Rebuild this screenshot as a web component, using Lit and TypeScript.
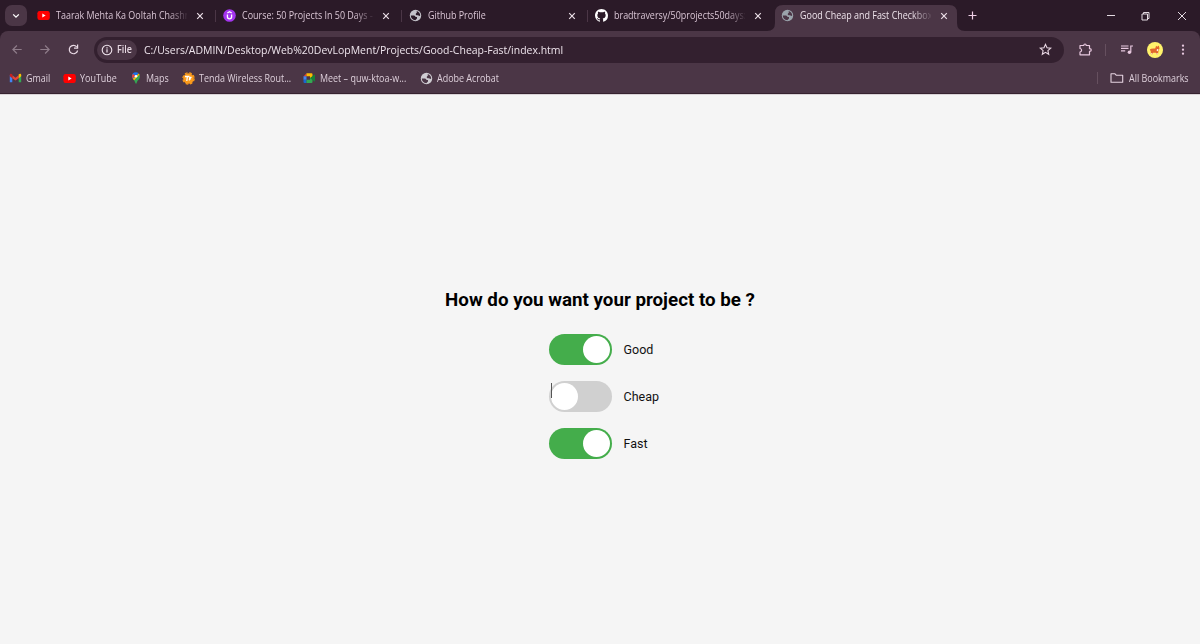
import { LitElement, html, css, nothing } from "lit";
import { customElement, property } from "lit/decorators.js";

const youtube = html`<svg width="13" height="13" viewBox="0 0 13 13"><rect x=".4" y="2" width="12.4" height="9" rx="2.2" fill="#f00"/><path d="M5.3 4.6v3.8l3.3-1.9z" fill="#fff"/></svg>`;
const udemy = html`<svg width="13" height="13" viewBox="0 0 13 13"><circle cx="6.5" cy="6.5" r="6.3" fill="#a435f0"/><path d="M4.4 5.6v2.2a2.1 2.1 0 0 0 4.2 0V5.6M4.3 4l2.2-1.3L8.7 4" fill="none" stroke="#fff" stroke-width="1.3"/></svg>`;
const globe = (bg: string, hole: string) => html`<svg width="13" height="13" viewBox="-.5 -.5 13 13"><circle cx="6" cy="6" r="5.700" fill=${bg}/><path fill=${hole} d="M1.300 6H4.400Q6 6.100 6 7.400H7.500V9.100L5.800 10.700Q1.600 10.300 1.300 6zM7.200 1.500Q10.600 2.600 10.700 6Q9.700 6.900 8.700 5.700H7Q5.700 5 6.400 4L7.300 3.200z"/></svg>`;
const github = html`<svg width="13" height="13" viewBox="0 0 16 16"><path fill="#fff" d="M8 0C3.580 0 0 3.580 0 8c0 3.540 2.290 6.530 5.470 7.590.4.070.550-.170.550-.380 0-.190-.010-.820-.010-1.490-2.010.370-2.530-.490-2.690-.940-.090-.230-.480-.940-.820-1.130-.280-.150-.680-.520-.010-.530.630-.010 1.080.580 1.230.820.720 1.210 1.870.870 2.330.660.070-.520.280-.870.510-1.070-1.780-.2-3.640-.890-3.640-3.950 0-.870.310-1.590.820-2.150-.080-.2-.360-1.020.080-2.120 0 0 .670-.210 2.200.820.640-.180 1.320-.270 2-.270s1.360.090 2 .270c1.530-1.040 2.200-.820 2.200-.820.440 1.100.160 1.920.080 2.120.510.560.820 1.270.820 2.150 0 3.070-1.870 3.750-3.650 3.950.290.250.540.730.540 1.480 0 1.070-.010 1.930-.010 2.200 0 .210.150.460.550.380A8.010 8.010 0 0 0 16 8c0-4.420-3.580-8-8-8z"/></svg>`;
const gmail = html`<svg width="13" height="12" viewBox="0 0 12 12"><path d="M.3 3v7.300h2.500V5z" fill="#4285f4"/><path d="M9.200 5v5.300h2.500V3z" fill="#34a853"/><path d="M2.800 3.300v2.900L6 8.600l3.200-2.400V3.300L6 5.700z" fill="#ea4335"/><path d="M.3 2.900c0-1.300 1.300-1.700 2.500-.7v4L.3 4.300z" fill="#c5221f"/><path d="M11.700 2.900c0-1.300-1.300-1.700-2.500-.7v4l2.500-1.900z" fill="#fbbc04"/></svg>`;
const maps = html`<svg width="12" height="12" viewBox="0 0 12 12"><path d="M6 .3a4 4 0 0 0-4 4c0 1.200.5 2 1.200 2.900L6 4.200l2.600-3A4 4 0 0 0 6 .3z" fill="#1a73e8"/><path d="M2.900 1.800A4 4 0 0 0 2.600 6.400l2.500-2.900z" fill="#ea4335"/><path d="M8.800 1.500 2.800 6.700 4.200 8.500 9.700 3z" fill="#fbbc04"/><path d="M9.500 2.400C10.600 4.900 9.500 6.700 8 8.300 7.100 9.300 6.900 10.800 6.200 11.700 5.500 12 5.300 9.800 4.100 8.400z" fill="#34a853"/><circle cx="6" cy="4.200" r="1.300" fill="#fff"/></svg>`;
const tenda = html`<svg width="13" height="13" viewBox="0 0 13 13"><circle cx="6.500" cy="6.500" r="5.300" fill="#fa9a1b"/><circle cx="6.500" cy="6.500" r="5.600" fill="none" stroke="#fa9a1b" stroke-width="1.300" stroke-dasharray="2.700 1.700"/><path d="M3 4.500h4.500M5.400 4.500 4.800 9M9.600 5.300H7.800L7.300 8.300M7.500 6.800h1.600" fill="none" stroke="#fff" stroke-width="1.300"/></svg>`;
const meet = html`<svg width="13" height="12" viewBox="0 0 13 12"><path d="M.5 4.500 3.500 1.200v3.300z" fill="#ea4335"/><path d="M3.500 1.200H8.500Q9.500 1.200 9.500 2.300V5L7 6.200V4.300H3.500z" fill="#fbbc04"/><path d="M.5 4.300h3v3.500h-3z" fill="#4285f4"/><path d="M.5 7.800h3v3.300h-2q-1 0-1-1z" fill="#1967d2"/><path d="M3.500 7.800H7V5.900l2.500.1V10.100q0 1-1 1h-5z" fill="#34a853"/><path d="M7 6.100 11.300 2.700q.7-.3.700.4v6q0 .7-.7.400z" fill="#188038"/></svg>`;
const cross = html`<svg width="8" height="8" viewBox="0 0 8 8"><path d="m1.200 1.200 5.600 5.600M6.800 1.200 1.200 6.800" stroke="currentColor" stroke-width="1.200"/></svg>`;

const tabs = [
  { icon: youtube, title: "Taarak Mehta Ka Ooltah Chashn" },
  { icon: udemy, title: "Course: 50 Projects In 50 Days -" },
  { icon: globe("#c4c2c9", "#2b1a28"), title: "Github Profile" },
  { icon: github, title: "bradtraversy/50projects50days:" },
  { icon: globe("#9aa3ab", "#4b3646"), title: "Good Cheap and Fast Checkbox" },
];
const bookmarks = [
  { icon: gmail, label: "Gmail", width: 54 },
  { icon: youtube, label: "YouTube", width: 66.500 },
  { icon: maps, label: "Maps", width: 52.500 },
  { icon: tenda, label: "Tenda Wireless Rout...", width: 120.500 },
  { icon: meet, label: "Meet – quw-ktoa-w...", width: 117.500 },
  { icon: globe("#cfccd2", "#4b3646"), label: "Adobe Acrobat", width: 100 },
];

@customElement("browser-chrome")
export class BrowserChrome extends LitElement {
  static styles = css`
    :host { display: block; height: 95px; box-sizing: border-box; background: #2b1a28; color: #e6d8e2; font: 10px/13px "Open Sans", "Noto Sans", sans-serif; }
    * { box-sizing: border-box; }
    svg { display: block; flex: none; }
    .narrow { display: inline-block; white-space: nowrap; transform: scaleX(.895); transform-origin: 0 50%; }
    .strip { display: flex; height: 31px; }
    .search { width: 22px; height: 21px; margin: 5px 3px 0 5px; border-radius: 7px; background: #4b3646; display: grid; place-items: center; }
    .tab { position: relative; width: 186px; height: 31px; display: flex; align-items: center; padding-left: 7px; color: #dac6d5; }
    .icon { width: 19px; display: flex; }
    .title { width: 131px; flex: none; white-space: nowrap; mask-image: linear-gradient(90deg, #000 112px, transparent 133px); }
    .close { width: 26px; display: grid; place-items: center; color: #ecdfe8; }
    .sep { width: 1px; height: 12px; background: #4b3646; margin-left: 2px; }
    .active { color: #eee3eb; }
    .active > .icon, .active > .title, .active > .close { position: relative; }
    .shape { position: absolute; left: -7px; top: 5px; }
    .plus { width: 36px; display: flex; align-items: center; padding-left: 8px; }
    .window { margin-left: auto; display: flex; align-items: center; }
    .toolbar { height: 32px; background: #4b3646; border-radius: 8px 8px 0 0; display: flex; align-items: center; padding: 5px 0 0 11px; }
    .nav { width: 28px; display: flex; }
    .url { width: 970px; height: 26px; margin-left: -1px; border-radius: 13px; background: #33202f; display: flex; align-items: center; padding: 0 12px 0 3px; }
    .file { width: 40px; height: 20px; flex: none; border-radius: 10px; background: #4b3646; display: flex; align-items: center; gap: 4px; padding-left: 4px; font-weight: 600; }
    .address { margin-left: 7px; flex: 1; font-size: 11.500px; line-height: 16px; color: #eee4ec; }
    .address .narrow { transform: scaleX(.910); }
    .tools { flex: 1; display: flex; align-items: center; padding-left: 14px; }
    .rule { width: 1px; height: 12px; background: #66505f; }
    .marks { height: 31px; background: #4b3646; border-bottom: 1px solid #36222f; display: flex; align-items: center; padding-left: 9px; color: #dfd1dc; }
    .mark { display: flex; align-items: center; gap: 4px; white-space: nowrap; }
    .all { margin-left: auto; width: 103px; display: flex; align-items: center; }
    .all svg { margin: 0 5px 0 12px; }
    .edge { height: 1px; background: #d9d3d7; }
  `;
  render() {
    return html`
      <div class="strip">
        <div class="search"><svg width="8" height="6" viewBox="0 0 8 6"><path d="M1.200 1.400 4 4.200l2.800-2.800" fill="none" stroke="#fff" stroke-width="1.300"/></svg></div>
        ${tabs.map((t, i) => html`
          <div class="tab ${i === 4 ? "active" : ""}">
            ${i === 4 ? html`<svg class="shape" width="198" height="26"><path fill="#4b3646" d="M0 26Q8 26 8 18V8Q8 0 16 0H182Q190 0 190 8V18Q190 26 198 26z"/></svg>` : nothing}
            <span class="icon">${t.icon}</span>
            <span class="title"><span class="narrow">${t.title}</span></span>
            <span class="close">${cross}</span>
            ${i < 3 ? html`<span class="sep"></span>` : nothing}
          </div>`)}
        <div class="plus"><svg width="9" height="9"><path d="M4.500 .5v8M.5 4.500h8" stroke="#efcfe6" stroke-width="1.200"/></svg></div>
        <div class="window">
          <svg width="94" height="12" viewBox="0 0 94 12" fill="none" stroke="#e4dbe2"><path d="M1 5.500h8M36 4h5.500v6H36zM37.500 4V2.500h5.500v6h-1.500M72 2l8 8M80 2l-8 8" stroke-width="1"/></svg>
        </div>
      </div>
      <div class="toolbar">
        <div class="nav"><svg width="12" height="12" viewBox="0 0 12 12"><path d="M10.700 5.500H2M5.900 1.500 1.900 5.500l4 4" fill="none" stroke="#8e7c89" stroke-width="1.200"/></svg></div>
        <div class="nav"><svg width="12" height="12" viewBox="0 0 12 12"><path d="M1.300 5.500H10M6.100 1.500l4 4-4 4" fill="none" stroke="#8e7c89" stroke-width="1.200"/></svg></div>
        <div class="nav"><svg width="13" height="12" viewBox="0 0 13 12"><path d="M9.700 2.800A4.200 4.200 0 1 0 10.600 6.500M10.600 .6v3.600H7" fill="none" stroke="#eadbe6" stroke-width="1.200"/></svg></div>
        <div class="url">
          <div class="file"><svg width="12" height="12" viewBox="0 0 12 12"><circle cx="6" cy="6" r="4.800" fill="none" stroke="#f0e4ed" stroke-width="1.100"/><path d="M6 5.300v3.200M6 3.200v1.200" stroke="#f0e4ed" stroke-width="1.200"/></svg><span class="narrow">File</span></div>
          <span class="address"><span class="narrow">C:/Users/ADMIN/Desktop/Web%20DevLopMent/Projects/Good-Cheap-Fast/index.html</span></span>
          <svg width="13" height="13" viewBox="0 0 13 13"><path d="m6.500 1.400 1.500 3.400 3.700.3-2.800 2.500.8 3.700-3.200-2-3.200 2 .8-3.700L1.300 5.100 5 4.800z" fill="none" stroke="#e9d7e4" stroke-width="1.100"/></svg>
        </div>
        <div class="tools">
          <svg width="15" height="14" viewBox="0 0 15 14"><path d="M2 2.500H5.800Q5.800 1 7 1T8.200 2.500H11.500v3.200q1.800 0 1.800 1.300T11.500 8.300V11.800H2V9Q3.600 8.700 3.600 7.200T2 5.500z" fill="none" stroke="#e8c9df" stroke-width="1.200" stroke-linejoin="round"/></svg>
          <span class="rule" style="margin:0 14px 0 12px"></span>
          <svg width="14" height="12" viewBox="0 0 14 12"><path d="M1 2h7.500M1 4.400h7.500M1 6.800h4.200M13 2H10.800V8.200" fill="none" stroke="#e8c9df" stroke-width="1.200"/><circle cx="9.400" cy="8.300" r="1.700" fill="#e8c9df"/></svg>
          <svg width="16" height="16" viewBox="0 0 16 16" style="margin-left:13px"><circle cx="8" cy="8" r="8" fill="#fff36b"/><path d="M2.800 7.500Q4 6.200 8.200 6.600L9.100 3.800l1.200 1 1.500-1.200.7 2.900-.9 1.800-.6 4H9.400L9 10.800H6l-.6 1.500H3.900L3.700 9.300z" fill="#e0672c"/><path d="m10 6.900 1.500.4-.6 2-1.300-.5zM4 11.300h1.400v1H4zM9.400 11.300h1.500v1H9.400z" fill="#fff2df"/></svg>
          <svg width="4" height="12" viewBox="0 0 4 12" style="margin-left:18px" fill="#e8c9df"><circle cx="2" cy="1.700" r="1.150"/><circle cx="2" cy="5.700" r="1.150"/><circle cx="2" cy="9.700" r="1.150"/></svg>
        </div>
      </div>
      <div class="marks">
        ${bookmarks.map((b) => html`<div class="mark" style="width:${b.width}px">${b.icon}<span class="narrow">${b.label}</span></div>`)}
        <div class="all"><span class="rule"></span><svg width="14" height="12" viewBox="0 0 14 12"><path d="M1 10.200V1.800h4l1.400 1.500h6.300v6.900z" fill="none" stroke="#e6d3e1" stroke-width="1.100" stroke-linejoin="round"/></svg><span class="narrow">All Bookmarks</span></div>
      </div>
      <div class="edge"></div>`;
  }
}

@customElement("toggle-row")
export class ToggleRow extends LitElement {
  @property() label = "";
  @property({ type: Boolean, reflect: true }) checked = false;
  @property({ type: Boolean }) caret = false;
  static styles = css`
    :host { display: flex; align-items: center; width: 150px; height: 31.250px; }
    .track { position: relative; box-sizing: border-box; width: 62.500px; height: 31.250px; padding: 2.350px 2.100px; border-radius: 16px; background: #d0d0d0; display: flex; }
    :host([checked]) .track { background: #44ad4b; justify-content: flex-end; }
    .ball { width: 27px; height: 27px; border-radius: 50%; background: #fff; }
    .label { margin: 1px 0 0 11.700px; font: 12.500px/16px Roboto, sans-serif; color: #111; }
    .caret { position: absolute; left: 2px; top: 2px; width: 1px; height: 15px; background: #555; }
  `;
  render() {
    return html`<div class="track"><div class="ball"></div>${this.caret ? html`<i class="caret"></i>` : nothing}</div><span class="label">${this.label}</span>`;
  }
}

@customElement("app-root")
export class AppRoot extends LitElement {
  static styles = css`
    :host { display: flex; flex-direction: column; height: 644px; overflow: hidden; background: #f5f5f5; }
    .page { flex: 1; display: flex; flex-direction: column; align-items: center; padding-top: 194px; }
    .heading { margin: 0 0 21.900px; font: 700 18.750px/23px Roboto, sans-serif; color: #000; }
    .rows { display: flex; flex-direction: column; gap: 15.620px; padding-left: 48.800px; }
  `;
  render() {
    return html`<browser-chrome></browser-chrome>
      <main class="page">
        <h2 class="heading">How do you want your project to be ?</h2>
        <div class="rows">
          <toggle-row label="Good" checked></toggle-row>
          <toggle-row label="Cheap" caret></toggle-row>
          <toggle-row label="Fast" checked></toggle-row>
        </div>
      </main>`;
  }
}
